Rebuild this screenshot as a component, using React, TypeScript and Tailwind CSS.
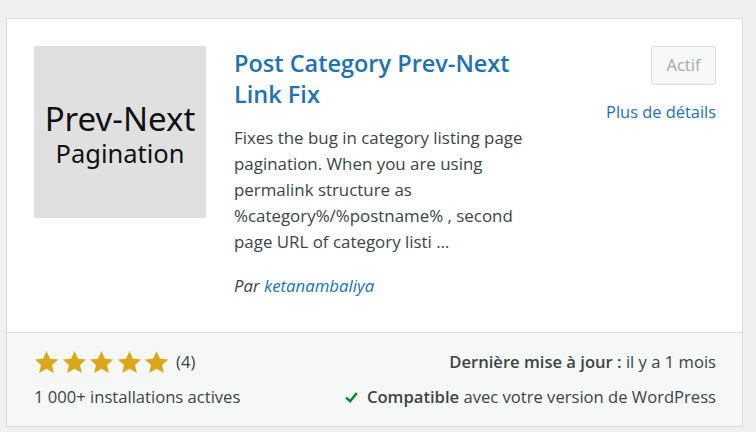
import React from 'react';

const Star = () => (
  <svg viewBox="0 0 20 20" className="w-[25px] h-[25px]" fill="#dba617">
    <path d="M10 .9l2.8 6 6.5.6-4.9 4.4 1.45 6.4L10 15l-5.85 3.3 1.45-6.4L.7 7.5l6.5-.6z" />
  </svg>
);

export default function App() {
  const font = { fontFamily: '"Open Sans", "Noto Sans", sans-serif' };
  return (
    <div className="w-[756px] h-[432px] bg-[#f0f0f1] pt-[18px] pl-[6px] overflow-hidden" style={font}>
      <div className="w-[737px] h-[409px] bg-white border border-[#dcdcde] flex flex-col">
        {/* top part */}
        <div className="flex flex-1 pl-[27px] pt-[27px] pr-[26px]">
          <div className="w-[172px] h-[172px] bg-[#e1e0e1] flex flex-col items-center justify-center text-[#111] shrink-0">
            <span className="text-[33px] leading-[38px] mt-[4px]" style={{ fontFamily: '"Noto Sans", sans-serif' }}>Prev-Next</span>
            <span className="text-[25.5px] leading-[30px]" style={{ fontFamily: '"Noto Sans", sans-serif' }}>Pagination</span>
          </div>
          <div className="ml-[28px] w-[310px]">
            <h3 className="text-[23.5px] leading-[31px] font-semibold text-[#2271b1] mt-[2px]">
              Post Category Prev-Next Link Fix
            </h3>
            <p className="mt-[15px] text-[16.9px] leading-[26px] text-[#3c434a]">
              Fixes the bug in category listing page pagination. When you are using permalink structure as
              %category%/%postname% , second page URL of category listi …
            </p>
            <p className="mt-[18px] text-[16.8px] leading-[26px] text-[#3c434a] italic">
              Par <span className="text-[#2271b1]">ketanambaliya</span>
            </p>
          </div>
          <div className="flex-1 flex flex-col items-end">
            <div className="h-[39px] w-[65px] border border-[#dcdcde] bg-[#f6f7f7] rounded-[3px] text-[#a7aaad] text-[16.6px] flex items-center justify-center">
              Actif
            </div>
            <span className="mt-[14px] text-[16.4px] leading-[26px] text-[#2271b1]">Plus de détails</span>
          </div>
        </div>
        {/* bottom part */}
        <div className="h-[94px] bg-[#f6f7f7] border-t border-[#dcdcde] pl-[27px] pr-[26px] pt-[16px] flex justify-between text-[16.6px] leading-[26px] text-[#3c434a]">
          <div className="flex flex-col gap-[9px]">
            <div className="flex items-center">
              <div className="flex gap-[2.5px]">
                <Star /><Star /><Star /><Star /><Star />
              </div>
              <span className="ml-[7px]">(4)</span>
            </div>
            <span>1 000+ installations actives</span>
          </div>
          <div className="flex flex-col items-end gap-[9px]">
            <span><strong className="font-semibold">Dernière mise à jour :</strong> il y a 1 mois</span>
            <span className="flex items-center">
              <svg viewBox="0 0 20 20" className="w-[17px] h-[17px] mr-[7px]" fill="#008a20">
                <path d="M15 3.8l2.3 1.7-8.7 11-5.9-5.3 1.9-2.1 3.7 3.3z" />
              </svg>
              <strong className="font-semibold">Compatible</strong>&nbsp;avec votre version de WordPress
            </span>
          </div>
        </div>
      </div>
    </div>
  );
}
